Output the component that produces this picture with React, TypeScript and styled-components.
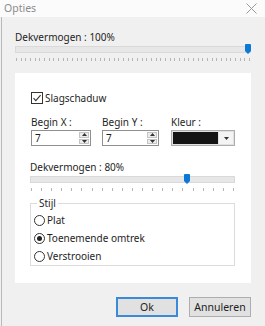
import { useState } from "react";
import styled, { createGlobalStyle } from "styled-components";

const GlobalStyle = createGlobalStyle`
  html, body {
    margin: 0;
    padding: 0;
    background: #f0f0f0;
  }
  * {
    box-sizing: border-box;
  }
`;

const Window = styled.div`
  width: 265px;
  height: 326px;
  background: #f0f0f0;
  font-family: "Noto Sans", "Open Sans", sans-serif;
  font-size: 10px;
  color: #1e1e1e;
  display: flex;
  flex-direction: column;
  overflow: hidden;
`;

const TitleBar = styled.div`
  height: 17px;
  background: #fbfbfb;
  display: flex;
  align-items: center;
  justify-content: space-between;
  padding: 0 8px 0 4px;
`;

const Title = styled.span`
  color: #8c8c8c;
  font-size: 10.5px;
  line-height: 13px;
`;

const Body = styled.div`
  flex: 1;
  border-left: 1px solid #b9b9b9;
  margin-left: 1px;
  padding: 14px 14px 0 13px;
  display: flex;
  flex-direction: column;
`;

const Label = styled.div`
  line-height: 13px;
  height: 13px;
  white-space: nowrap;
`;

const SliderBox = styled.div<{ $w: number }>`
  position: relative;
  width: ${(p) => p.$w}px;
  height: 20px;
`;

const Track = styled.div`
  position: absolute;
  left: 0;
  right: 0;
  top: 2px;
  height: 7px;
  background: #e7e7e7;
  border: 1px solid #d9d9d9;
`;

const Thumb = styled.div`
  position: absolute;
  top: 0;
  width: 6px;
  height: 10px;
  background: #0a78d4;
  border-radius: 1px 1px 0 0;
  clip-path: polygon(0 0, 100% 0, 100% 70%, 50% 100%, 0 70%);
`;

const Ticks = styled.div`
  position: absolute;
  left: 1px;
  right: 1px;
  top: 14px;
  height: 4px;
  display: flex;
  justify-content: space-between;
`;

const Tick = styled.span`
  width: 1px;
  height: 3px;
  background: #b5b5b5;
`;

const Panel = styled.div`
  margin-top: 9px;
  width: 236px;
  height: 210px;
  background: #fff;
  padding: 19px 0 0 16px;
  display: flex;
  flex-direction: column;
`;

const CheckRow = styled.label`
  display: flex;
  align-items: center;
  gap: 2px;
  height: 12px;
  line-height: 12px;
`;

const Fields = styled.div`
  margin-top: 12px;
  display: flex;
`;

const Field = styled.div<{ $w: number; $mr: number }>`
  width: ${(p) => p.$w}px;
  margin-right: ${(p) => p.$mr}px;
  flex: none;
  display: flex;
  flex-direction: column;
  gap: 1px;
`;

const SpinBox = styled.div`
  height: 16px;
  background: #fff;
  border: 1px solid #8f8f8f;
  display: flex;
  align-items: stretch;
  justify-content: space-between;
  padding: 0 1px 0 3px;
`;

const SpinValue = styled.span`
  line-height: 14px;
`;

const SpinButtons = styled.div`
  width: 10px;
  display: flex;
  flex-direction: column;
  gap: 1px;
  padding: 1px 0;
`;

const SpinButton = styled.div`
  flex: 1;
  background: #ececec;
  border: 1px solid #c4c4c4;
  display: flex;
  align-items: center;
  justify-content: center;
`;

const ColorBox = styled.div`
  height: 16px;
  background: #e1e1e1;
  border: 1px solid #adadad;
  display: flex;
  padding: 1px;
  gap: 1px;
`;

const Swatch = styled.div<{ $c: string }>`
  flex: 1;
  background: ${(p) => p.$c};
`;

const DropArrow = styled.div`
  width: 14px;
  background: #f4f4f4;
  display: flex;
  align-items: center;
  justify-content: center;
`;

const Section2 = styled.div`
  margin-top: 15px;
  margin-left: -1px;
  display: flex;
  flex-direction: column;
`;

const Group = styled.fieldset`
  margin: 3px 0 0 -1px;
  width: 205px;
  height: 69px;
  border: 1px solid #dcdcdc;
  padding: 1px 0 0 3px;
  display: flex;
  flex-direction: column;
`;

const Legend = styled.legend`
  padding: 0 2px;
  margin-left: 3px;
  line-height: 13px;
`;

const RadioRow = styled.label`
  display: flex;
  align-items: center;
  gap: 2px;
  height: 18px;
`;

const RadioCircle = styled.span<{ $on: boolean }>`
  width: 11px;
  height: 11px;
  border-radius: 50%;
  border: 1px solid #333;
  display: flex;
  align-items: center;
  justify-content: center;
  &::after {
    content: "";
    width: 5px;
    height: 5px;
    border-radius: 50%;
    background: ${(p) => (p.$on ? "#222" : "transparent")};
  }
`;

const Footer = styled.div`
  display: flex;
  justify-content: flex-end;
  gap: 11px;
  margin-top: 14px;
  width: 236px;
`;

const Button = styled.button<{ $primary?: boolean }>`
  flex: none;
  width: 62px;
  height: 20px;
  font-family: inherit;
  font-size: 10.5px;
  color: #1e1e1e;
  background: #e1e1e1;
  border: ${(p) => (p.$primary ? "2px solid #3b8ad8" : "1px solid #adadad")};
  padding: 0;
  line-height: 14px;
`;

const Checkbox = () => (
  <svg width="12" height="12" viewBox="0 0 12 12">
    <rect x="0.5" y="0.5" width="11" height="11" fill="#fff" stroke="#333" />
    <path d="M2.5 6.2 L4.8 8.6 L9.6 3.2" fill="none" stroke="#333" strokeWidth="1.1" />
  </svg>
);

const Arrow = ({ up }: { up?: boolean }) => (
  <svg width="5" height="3" viewBox="0 0 5 3">
    <path d={up ? "M0 3 L2.5 0 L5 3 Z" : "M0 0 L5 0 L2.5 3 Z"} fill="#333" />
  </svg>
);

const Slider = ({ width, value, ticks }: { width: number; value: number; ticks: number }) => (
  <SliderBox $w={width}>
    <Track />
    <Thumb style={{ left: value }} />
    <Ticks>
      {Array.from({ length: ticks }).map((_, i) => (
        <Tick key={i} />
      ))}
    </Ticks>
  </SliderBox>
);

const Spin = ({ value }: { value: string }) => (
  <SpinBox>
    <SpinValue>{value}</SpinValue>
    <SpinButtons>
      <SpinButton>
        <Arrow up />
      </SpinButton>
      <SpinButton>
        <Arrow />
      </SpinButton>
    </SpinButtons>
  </SpinBox>
);

export default function App() {
  const [style, setStyle] = useState(1);
  const styles = ["Plat", "Toenemende omtrek", "Verstrooien"];

  return (
    <>
      <GlobalStyle />
      <Window>
        <TitleBar>
          <Title>Opties</Title>
          <svg width="11" height="11" viewBox="0 0 11 11">
            <path d="M0.5 0.5 L10.5 10.5 M10.5 0.5 L0.5 10.5" stroke="#9a9a9a" strokeWidth="1" />
          </svg>
        </TitleBar>
        <Body>
          <Label>Dekvermogen : 100%</Label>
          <Slider width={236} value={230} ticks={51} />
          <Panel>
            <CheckRow>
              <Checkbox />
              <span>Slagschaduw</span>
            </CheckRow>
            <Fields>
              <Field $w={60} $mr={11}>
                <Label>Begin X :</Label>
                <Spin value="7" />
              </Field>
              <Field $w={57} $mr={12}>
                <Label>Begin Y :</Label>
                <Spin value="7" />
              </Field>
              <Field $w={64} $mr={0}>
                <Label>Kleur :</Label>
                <ColorBox>
                  <Swatch $c="#141414" />
                  <DropArrow>
                    <Arrow />
                  </DropArrow>
                </ColorBox>
              </Field>
            </Fields>
            <Section2>
              <Label>Dekvermogen : 80%</Label>
              <Slider width={205} value={154} ticks={21} />
            </Section2>
            <Group>
              <Legend>Stijl</Legend>
              {styles.map((s, i) => (
                <RadioRow key={s} onClick={() => setStyle(i)}>
                  <RadioCircle $on={style === i} />
                  <span>{s}</span>
                </RadioRow>
              ))}
            </Group>
          </Panel>
          <Footer>
            <Button $primary>Ok</Button>
            <Button>Annuleren</Button>
          </Footer>
        </Body>
      </Window>
    </>
  );
}
